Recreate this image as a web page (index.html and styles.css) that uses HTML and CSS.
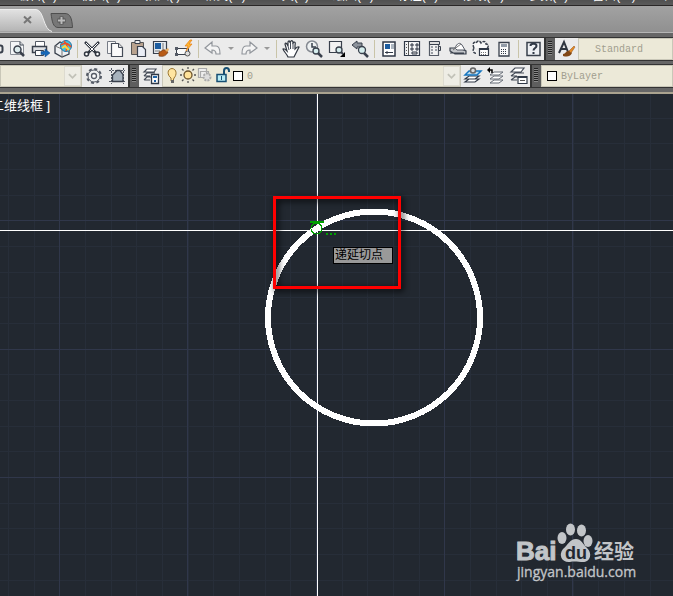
FILE: index.html
```
<!DOCTYPE html>
<html lang="zh-CN">
<head>
<meta charset="utf-8">
<title>CAD</title>
<link rel="stylesheet" href="styles.css">
</head>
<body>
<nav class="menu">
  <a href="#">编辑(E)</a><a href="#">视图(V)</a><a href="#">插入(I)</a><a href="#">格式(O)</a><a href="#">工具(T)</a><a href="#">绘图(D)</a><a href="#">标注(N)</a><a href="#">修改(M)</a><a href="#">参数(P)</a><a href="#">窗口(W)</a><a href="#">帮助(H)</a>
</nav>
<div class="tabs">
  <button class="tab" aria-label="关闭">
    <svg width="56" height="23" viewBox="0 0 56 23">
      <defs><linearGradient id="tabfill" x1="0" y1="0" x2="0" y2="1"><stop offset="0" stop-color="#e2e2e2"/><stop offset="1" stop-color="#b4b4b4"/></linearGradient></defs>
      <path d="M0 .5H36C44 .5 43 21 52 22.500H0Z" fill="url(#tabfill)"/>
      <path d="M0 .5H36C44 .5 43 21 52 22.500" fill="none" stroke="#eee"/>
      <path d="M24 7.500l7 6.500M31 7.500l-7 6.500" stroke="#777" stroke-width="2"/>
    </svg>
  </button>
  <button class="newtab" aria-label="新建">
    <svg width="24" height="17" viewBox="0 0 24 17">
      <path d="M1 1.500H15C20 1.500 22 6 22.500 15.500H8C3 15.500 2 9 1 1.500Z" fill="#777" stroke="#4e4e4e"/>
      <path d="M11.500 4.500v8M7.500 8.500h8" stroke="#555" stroke-width="4"/>
      <path d="M11.500 5v7M8 8.500h7" stroke="#bbb" stroke-width="2"/>
    </svg>
  </button>
</div>
<div class="row">
  <div class="bar first">
    <button aria-label="打印"><svg viewBox="0 0 20 20"><rect x="3.500" y="6.500" width="15" height="7" rx="2" fill="#eee" stroke="#39404c" stroke-width="2"/></svg></button>
    <button aria-label="打印预览"><svg viewBox="0 0 20 20"><path d="M3.500 2.500H13L16.500 6v9.500H3.500Z" fill="#f4f6f8" stroke="#8b9098"/><path d="M13 2.500V6h3.500" fill="none" stroke="#39404c"/><circle cx="10.500" cy="10.500" r="3.500" fill="#dcebed" stroke="#39404c" stroke-width="1.500"/><path d="M13 13l4 4" stroke="#39404c" stroke-width="2.500"/></svg></button>
    <button aria-label="发布"><svg viewBox="0 0 20 20"><path d="M5.500 7V2.500h9V7" fill="#fff" stroke="#555b66"/><path d="M2.500 7.500h14v6h-14z" fill="#dfe1e4" stroke="#39404c" stroke-width="1.500"/><path d="M5.500 11.500h8v5h-8z" fill="#fff" stroke="#39404c"/><path d="M11 12.500h4V10l5 4-5 4v-2.500h-4z" fill="#1768b8" stroke="#0f4a8c" stroke-width=".5"/></svg></button>
    <button aria-label="三维打印"><svg viewBox="0 0 20 20"><path d="M2 7l5-4 9 4v8l-7 3-7-4Z" fill="#eef0f2" stroke="#39404c" stroke-width="1.300"/><path d="M2 7l7 3v8" fill="none" stroke="#777"/><circle cx="13" cy="7" r="5.500" fill="#44c5dc" stroke="#2472a8"/><path d="M8 6c4-3 7-2 10 2M11 2c3 3 4 6 2 10" fill="none" stroke="#f04c24" stroke-width="1.500"/><path d="M9 9l3-2 4 4" fill="none" stroke="#ffd83d" stroke-width="2"/></svg></button>
    <i class="sep"></i>
    <button aria-label="剪切"><svg viewBox="0 0 20 20"><path d="M3 3l11 11M17 3L6 14" stroke="#303640" stroke-width="2.500"/><path d="M4 4l8 8M16 4l-8 8" stroke="#fff"/><circle cx="4.500" cy="15" r="2" fill="#fff" stroke="#303640" stroke-width="1.500"/><circle cx="15.500" cy="15" r="2" fill="#fff" stroke="#303640" stroke-width="1.500"/></svg></button>
    <button aria-label="复制"><svg viewBox="0 0 20 20"><path d="M2.500 2.500h8v12h-8z" fill="#f6f6f6" stroke="#777c86"/><path d="M6.500 4.500h7l4 4v9h-11z" fill="#fafafa" stroke="#444b57" stroke-width="1.200"/><path d="M13.500 4.500v4h4" fill="#ddd" stroke="#444b57"/></svg></button>
    <button aria-label="粘贴"><svg viewBox="0 0 20 20"><path d="M3.500 3.500h12v12h-12z" fill="#b8a28e" stroke="#555"/><path d="M7 1.500h5v3H7z" fill="#eee" stroke="#39404c"/><path d="M9.500 7.500h5l3 3v7h-8z" fill="#e9edf5" stroke="#39404c" stroke-width="1.200"/></svg></button>
    <button aria-label="特性匹配"><svg viewBox="0 0 20 20"><path d="M2.500 2.500h13v12h-13z" fill="#e6ebf0" stroke="#39404c" stroke-width="1.200"/><path d="M4 4h6v6H4z" fill="#1d5da0"/><path d="M12 4v7M4 12h5" stroke="#777"/><path d="M8 13c3 0 3-3 6-2l3 2c-2 4-5 5-9 4z" fill="#b85b16" stroke="#713c18" stroke-width=".7"/><path d="M14 11l3-2 1 2-2 2z" fill="#e9b064"/></svg></button>
    <button aria-label="块编辑器"><svg viewBox="0 0 20 20"><path d="M2.500 9.500h12v6h-12z" fill="#fafafa" stroke="#39404c"/><path d="M1 8h3v3H1zM1 14h3v3H1z" fill="#555b66"/><circle cx="13.500" cy="14.500" r="2.500" fill="#ddd" stroke="#555"/><path d="M16 1l-5 6h3l-2 5 6-7h-3l3-4z" fill="#ffb52e" stroke="#e57d16" stroke-width=".7"/></svg></button>
    <i class="sep"></i>
    <button aria-label="放弃"><svg viewBox="0 0 20 20"><path d="M2 9l7-6v4h4c3 0 4 3 4 8h-4c0-3-1-4-4-4v3Z" fill="#f4f4f4" stroke="#92969c" stroke-width="1.200"/></svg></button>
    <button class="drop" aria-label="放弃列表"><svg viewBox="0 0 12 20"><path d="M3 8h6l-3 3z" fill="#999"/></svg></button>
    <button aria-label="重做"><svg viewBox="0 0 20 20"><path d="M18 9l-7-6v4H7c-3 0-4 3-4 8h4c0-3 1-4 4-4v3Z" fill="#f4f4f4" stroke="#92969c" stroke-width="1.200"/></svg></button>
    <button class="drop" aria-label="重做列表"><svg viewBox="0 0 12 20"><path d="M3 8h6l-3 3z" fill="#999"/></svg></button>
    <i class="sep"></i>
    <button aria-label="平移"><svg viewBox="0 0 20 20"><path d="M7 18c-1-3-4-5-5-8 1-1 2 0 4 2L4 5c1-2 2 0 3 2V3c1-2 2-1 2 1l1-2c1-1 2 0 2 2l1-1c2 0 1 2 1 4v3c2-2 3-3 4-2l-4 8-1 2Z" fill="#fff" stroke="#303640" stroke-width="1.200"/><path d="M7 7l1 4M9.500 4v6M12 4v6" stroke="#444b57"/></svg></button>
    <button aria-label="实时缩放"><svg viewBox="0 0 20 20"><circle cx="8" cy="7.500" r="5.500" fill="#eef1f2" stroke="#858a92" stroke-width="1.500"/><path d="M8 4v4h4" fill="none" stroke="#39404c" stroke-width="1.500"/><circle cx="12" cy="12" r="3" fill="#d6eeee" stroke="#39404c" stroke-width="1.300"/><path d="M14 14l4 4" stroke="#39404c" stroke-width="2.500"/></svg></button>
    <button aria-label="窗口缩放"><svg viewBox="0 0 20 20"><path d="M2.500 2.500h12v11h-12z" fill="#f2f2f2" stroke="#39404c" stroke-width="1.200"/><circle cx="12" cy="11" r="3" fill="#d6eeee" stroke="#39404c" stroke-width="1.300"/><path d="M14 13l2 2" stroke="#39404c" stroke-width="2"/><path d="M18 13v5h-5z" fill="#000"/></svg></button>
    <button aria-label="缩放上一个"><svg viewBox="0 0 20 20"><path d="M2 6l5-4v2h5v4H7v2z" fill="#8c929b" stroke="#39404c"/><circle cx="12" cy="11" r="3.500" fill="#d6eeee" stroke="#39404c" stroke-width="1.300"/><path d="M14 14l4 4" stroke="#39404c" stroke-width="2.500"/></svg></button>
    <i class="sep"></i>
    <button aria-label="特性"><svg viewBox="0 0 20 20"><path d="M4 3h12v14H4z" fill="#fff" stroke="#303947" stroke-width="1.500"/><path d="M6 5h5v5H6z" fill="#1d5da0"/><path d="M12 5h3v5h-3z" fill="#aeb8c2"/><path d="M6 13.500h8M8 12v3" stroke="#303947"/></svg></button>
    <button aria-label="设计中心"><svg viewBox="0 0 20 20"><path d="M2.500 2.500h15v14h-15z" fill="#f4f5f6" stroke="#303947" stroke-width="1.200"/><path d="M6.500 3v13" stroke="#555"/><path d="M4.500 5v10" stroke="#555" stroke-dasharray="1 2"/><path d="M9 5h2v2H9zM14 5h2v2h-2zM9 9h2v2H9zM14 9h2v2h-2zM10 13h5v2h-5z" fill="#ddd" stroke="#303947"/></svg></button>
    <button aria-label="工具选项板"><svg viewBox="0 0 20 20"><path d="M4.500 2.500h9v14h-9z" fill="#f2f2f2" stroke="#555b66" stroke-width="1.200"/><path d="M4.500 2.500h10v3h-10zM13.500 7.500h2v4h-2z" fill="#ddd" stroke="#39404c"/><path d="M6 7h2v2H6zM10 7h2v2h-2zM6 10h2v2H6zM10 10h2v2h-2zM6 13h2v2H6z" fill="#999da4"/></svg></button>
    <button aria-label="图纸集"><svg viewBox="0 0 20 20"><path d="M2 9l9 0 7 3v3H7l-5-3zM2 14h14" fill="#c4c7cb" stroke="#39404c" stroke-width="1.200"/><path d="M7 9c2-5 5-6 7-3l3 5H9z" fill="#fff" stroke="#555b66"/><path d="M5 11l8-6" stroke="#777"/></svg></button>
    <button aria-label="标记集"><svg viewBox="0 0 20 20"><path d="M3 9C1 5 3 2 5 4c2-3 4-2 5 0 3-3 5-1 5 1 3 0 3 4 0 5M3 9c-2 3 0 6 3 5" fill="#f8f8f8" stroke="#39404c" stroke-width="1.500" stroke-dasharray="3 1"/><path d="M8.500 9.500h9v7h-9z" fill="#fff" stroke="#303947" stroke-width="1.200"/><path d="M8 9h10v2H8z" fill="#303947"/><path d="M10 13.500h6M10 15.500h6" stroke="#777" stroke-dasharray="1 1"/></svg></button>
    <button aria-label="计算器"><svg viewBox="0 0 20 20"><path d="M5 3.500h10v13.500H5z" fill="#fafafa" stroke="#39404c" stroke-width="1.300"/><path d="M7 5h6v3H7z" fill="#929ba7"/><path d="M7 10.500h6M7 12.500h6M7 14.500h6" stroke="#303947" stroke-dasharray="1 1"/></svg></button>
    <i class="sep"></i>
    <button aria-label="帮助"><svg viewBox="0 0 20 20"><path d="M4 3.500h13v13H4z" fill="#eef0f4" stroke="#39404c" stroke-width="1.500"/><path d="M7.500 7c0-3 6-3 6 0 0 2-3 2-3 4.500M10.500 13v2" fill="none" stroke="#303947" stroke-width="2"/></svg></button>
  </div>
  <div class="bar styles">
    <span class="grip"></span>
    <button aria-label="文字样式"><svg viewBox="0 0 20 20"><path d="M2 14L7 3l4 10M4 10h6" fill="none" stroke="#303640" stroke-width="2"/><path d="M6 15c3 0 3-4 7-3l2 2c-2 4-5 4-9 3z" fill="#814716"/><path d="M12 12l5-5 1 1-4 6z" fill="#e58a24" stroke="#8a5020" stroke-width=".5"/></svg></button>
    <div class="combo wide"><select aria-label="样式"><option>Standard</option></select></div>
  </div>
</div>
<div class="row">
  <div class="bar workspace">
    <div class="combo"><select aria-label="工作空间"><option></option></select><svg class="chev" viewBox="0 0 16 20"><path d="M4 8l4 4 4-4" fill="none" stroke="#c2c2b8" stroke-width="2"/></svg></div>
    <button aria-label="工作空间设置"><svg viewBox="0 0 20 20"><circle cx="10" cy="10" r="7" fill="none" stroke="#555b66" stroke-width="2" stroke-dasharray="3 2.500"/><circle cx="10" cy="10" r="6" fill="#eef0f1" stroke="#555b66"/><circle cx="10" cy="10" r="2.500" fill="#fff" stroke="#555b66" stroke-width="1.300"/></svg></button>
    <button aria-label="我的工作空间"><svg viewBox="0 0 20 20"><path d="M2 4.500h16M2 15.500h16M4.500 2v16M16.500 2v16" stroke="#555b66" stroke-dasharray="2 1"/><path d="M5.500 15.500V9L10 4.500h3l3 4v7z" fill="#a8b3bd" stroke="#39404c" stroke-width="1.300"/></svg></button>
  </div>
  <div class="bar layers">
    <span class="grip"></span>
    <button aria-label="图层特性"><svg viewBox="0 0 20 20"><path d="M3 6l3-3h9l-2 3zM3 10l3-3h8M3 14l3-3h4M3 6h6M3 10h6M3 14h6" fill="#fff" stroke="#444b57" stroke-width="1.200"/><path d="M10.500 8.500h7v9h-7z" fill="#fff" stroke="#303947" stroke-width="1.300"/><path d="M12 10h4v2h-4z" fill="#2167aa"/><path d="M14 14v2" stroke="#1d5da0" stroke-width="2"/></svg></button>
    <div class="combo">
      <svg class="state" viewBox="0 0 70 20"><path d="M8 12C4 9 4 3 9 2.500c5 .5 5 6.500 2 9.500l-1 3H8z" fill="#ffe5a0" stroke="#9a742d"/><path d="M8 14h3v3H8z" fill="#666"/><circle cx="25" cy="9" r="4" fill="#ffe39a" stroke="#6d542c" stroke-width="1.300"/><path d="M25 1v2M25 15v2M17 9h2M31 9h2M19 3l1.500 1.500M31 3l-1.500 1.500M19 15l1.500-1.500M31 15l-1.500-1.500" stroke="#555" stroke-width="1.300"/><path d="M35.500 2.500h8v9h-8zM37.500 5.500h8v6h-8z" fill="#eee" stroke="#aaa" stroke-width="1.200"/><circle cx="44" cy="11" r="3.500" fill="#ddd" stroke="#aaa" stroke-width="2" stroke-dasharray="2 1"/><path d="M54 8.500h9v7h-9z" fill="#b8edf6" stroke="#164e72" stroke-width="1.500"/><path d="M61 8V5c0-4 5-4 5 0v1" fill="none" stroke="#164e72" stroke-width="2"/><path d="M58.500 10v4" stroke="#164e72"/></svg>
      <i class="swatch"></i><select aria-label="图层"><option>0</option></select><svg class="chev" viewBox="0 0 16 20"><path d="M4 8l4 4 4-4" fill="none" stroke="#c2c2b8" stroke-width="2"/></svg>
    </div>
    <button aria-label="置为当前"><svg viewBox="0 0 20 20"><path d="M2 16l4-3h10l-4 3zM2 13l4-3h10l-4 3z" fill="#fff" stroke="#303947" stroke-width="1.200"/><path d="M2 9l4-4h12l-4 4z" fill="#b9dcf2" stroke="#1675bf" stroke-width="1.500"/><circle cx="10" cy="4.500" r="2.500" fill="#ddd" stroke="#666" stroke-width="1.500"/></svg></button>
    <button aria-label="上一个图层"><svg viewBox="0 0 20 20"><path d="M4 17l4-3h9l-4 3zM4 13l4-3h9l-4 3zM4 9l4-3h9l-4 3z" fill="#fff" stroke="#666c76"/><path d="M2 4h4v3" fill="none" stroke="#000" stroke-width="1.500"/><path d="M1 4l3-3v6z" fill="#000"/></svg></button>
    <button aria-label="图层状态"><svg viewBox="0 0 20 20"><path d="M2 6l4-4h9l-3 4zM2 10l4-3h9M2 14l4-3h4M2 10h6M2 14h6" fill="#fff" stroke="#444b57" stroke-width="1.200"/><path d="M9 10.500h9v7H9z" fill="#fff" stroke="#303947" stroke-width="1.200"/><path d="M9 10h9v2H9z" fill="#303947"/><path d="M11 14.500h5" stroke="#555"/></svg></button>
  </div>
  <div class="bar color">
    <span class="grip"></span>
    <div class="combo"><i class="swatch"></i><select aria-label="颜色"><option>ByLayer</option></select></div>
  </div>
</div>
<main class="canvas">
  <svg class="drawing" aria-hidden="true">
    <g transform="translate(0 -94)" shape-rendering="crispEdges">
      <circle cx="374" cy="317.500" r="106" fill="none" stroke="#fff" stroke-width="6"/>
      <rect x="0" y="230" width="100%" height="1" fill="#fff"/>
      <rect x="317" y="94" width="1" height="100%" fill="#fff"/>
      <path d="M310 222h14" stroke="#00a000" stroke-width="2"/>
      <circle cx="316.500" cy="228.500" r="5.500" fill="none" stroke="#00a000"/>
      <path d="M326 233h2v2h-2zM330 233h2v2h-2zM334 233h2v2h-2z" fill="#00a000"/>
    </g>
  </svg>
  <span class="viewlabel">二维线框 ]</span>
  <span class="tip">递延切点</span>
  <div class="mark"></div>
  <svg class="logo" width="124" height="60" viewBox="0 0 124 60">
    <g fill="#c2c5c8">
      <text class="brand" x="0" y="36">Bai</text>
      <ellipse cx="46" cy="14" rx="4.500" ry="6"/><ellipse cx="54.500" cy="5.500" rx="4.500" ry="6"/><ellipse cx="65.500" cy="6.500" rx="4.500" ry="6"/><ellipse cx="72" cy="17" rx="4.500" ry="6"/>
      <path d="M60 15c5 0 7 5 11 9 6 6 3 14-4 14-4 0-9-1-13 0-8 1-12-7-7-13 5-4 7-10 13-10z"/>
      <text class="du" x="49" y="35">du</text>
      <text class="cn" x="78" y="35">经验</text>
      <text class="url" x="1" y="53">jingyan.baidu.com</text>
    </g>
  </svg>
</main>
</body>
</html>
```
FILE: styles.css
```
* { box-sizing: border-box; }
body {
  margin: 0;
  min-height: 100vh;
  display: flex;
  flex-direction: column;
  overflow: hidden;
  background: #666;
  font: 12px "Liberation Sans", "Noto Sans CJK SC", sans-serif;
}
button { border: 0; padding: 0; margin: 0; background: none; display: flex; align-items: center; justify-content: center; }
.menu {
  height: 6px;
  display: flex;
  align-items: flex-end;
  gap: 24px;
  padding: 0 0 3px 17px;
  overflow: hidden;
  background: linear-gradient(#505050, #5a5a5a);
  border-bottom: 1px solid #292626;
}
.menu a { color: #fff; text-decoration: none; line-height: 12px; white-space: nowrap; flex: none; }
.tabs {
  height: 27px;
  display: flex;
  align-items: flex-end;
  background: linear-gradient(#a2a2a2, #909090);
  border-bottom: 1px solid #b5b5b5;
}
.tab { width: 50px; overflow: visible; justify-content: flex-start; }
.tab svg { flex: none; }
.newtab { padding-bottom: 3px; }
.row { display: flex; margin-top: 4px; height: 24px; }
.row + .row { margin-top: 3px; }
.bar {
  display: flex;
  flex: none;
  background: #ebebeb;
  border: solid #333;
  border-width: 1px 0;
  border-right-width: 2px;
}
.bar button { width: 23px; flex: none; }
.bar button svg { width: 20px; height: 20px; flex: none; }
.bar .drop { width: 13px; }
.bar .drop svg { width: 12px; }
.first { margin-left: -18px; }
.sep { width: 6px; flex: none; background: linear-gradient(#c9c4a8, #c9c4a8) 3px 2px / 1px 18px no-repeat; }
.grip {
  width: 9px;
  flex: none;
  background: repeating-linear-gradient(#222 0 1px, #888 1px 2px) 2px 3px / 4px 14px no-repeat #5e5e5e;
}
.combo {
  display: flex;
  align-items: center;
  flex: 1;
  min-width: 0;
  border: 1px solid #fffef5;
  outline: 1px solid #c9c7b8;
  outline-offset: -1px;
  background: #ece9d8;
}
.combo select {
  appearance: none;
  flex: 1;
  min-width: 0;
  border: 0;
  padding: 0 4px;
  background: transparent;
  color: #a19e8f;
  font: 10px "Liberation Mono", monospace;
}
.combo.wide select { padding-left: 16px; }
.chev { width: 17px; height: 20px; flex: none; background: #eeede5; border: 1px solid #dddbd0; }
.state { width: 70px; height: 20px; flex: none; }
.swatch { width: 10px; height: 10px; flex: none; margin-left: 5px; border: 1px solid #000; background: #fff; }
.state + .swatch { margin-left: 0; }
.styles, .color { flex: 1; border-right: 0; }
.workspace { width: 130px; }
.layers { width: 402px; }
/* Grid: five minor cells per major cell; both periods repeat on whole pixels. */
.canvas {
  flex: 1;
  position: relative;
  margin-top: 4px;
  overflow: hidden;
  border-top: 2px solid #aaa38f;
  background:
    linear-gradient(90deg, #30374a 0 1px, transparent 1px 128px, #30374a 128px 129px, transparent 129px 257px, #30374a 257px 258px, transparent 258px) 59px 0 / 385px 100%,
    linear-gradient(#30374a 0 1px, transparent 1px 129px, #30374a 129px 130px, transparent 130px 257px, #30374a 257px 258px, transparent 258px) 0 126px / 100% 385px,
    linear-gradient(90deg, #272e39 0 1px, transparent 1px 26px, #272e39 26px 27px, transparent 27px 51px, #272e39 51px 52px, transparent 52px) 8px 0 / 77px 100%,
    linear-gradient(#272e39 0 1px, transparent 1px 25px, #272e39 25px 26px, transparent 26px 51px, #272e39 51px 52px, transparent 52px) 0 24px / 100% 77px,
    #222830;
}
.drawing { position: absolute; inset: 0; width: 100%; height: 100%; }
.viewlabel { position: absolute; left: -9px; top: 4px; color: #fff; font-size: 13px; line-height: 16px; white-space: nowrap; }
.tip {
  position: absolute;
  left: 333px;
  top: 153px;
  width: 60px;
  height: 17px;
  padding-left: 1px;
  border: 1px solid #000;
  background: #999;
  color: #000;
  line-height: 15px;
}
.mark {
  position: absolute;
  left: 273px;
  top: 102px;
  width: 128px;
  height: 93px;
  border: 3px solid #f00;
  filter: drop-shadow(2px 2px 3px #000);
}
.logo { position: absolute; left: 516px; top: 430px; overflow: visible; }
.brand { font: bold 26px "Liberation Sans", sans-serif; stroke: #c2c5c8; stroke-width: 1px; }
.du { font: bold 18px "Liberation Sans", sans-serif; fill: #222830; }
.cn { font: bold 20px "Noto Sans CJK SC", sans-serif; }
.url { font: 14px "Open Sans", sans-serif; stroke: #c2c5c8; stroke-width: 0.3px; }
```
